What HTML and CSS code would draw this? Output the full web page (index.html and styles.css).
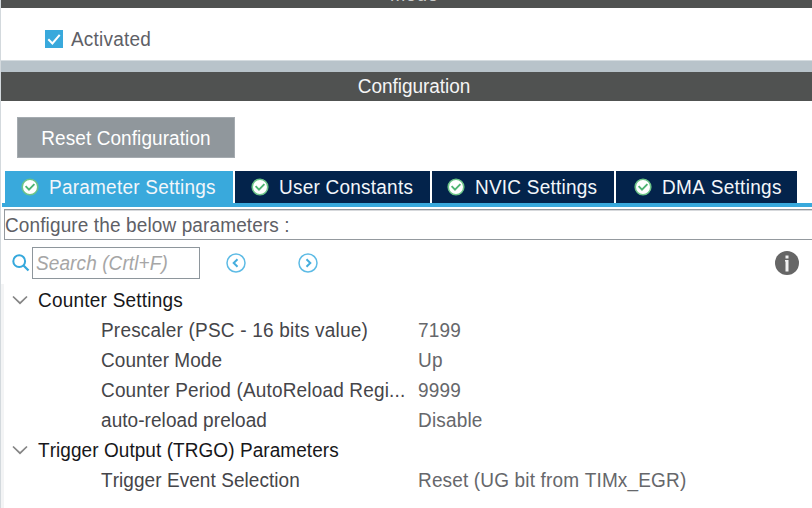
FILE: index.html
```html
<!DOCTYPE html>
<html lang="en">
<head>
<meta charset="utf-8">
<title>Timer configuration</title>
<link rel="stylesheet" href="styles.css">
</head>
<body>
<svg class="defs" aria-hidden="true">
  <symbol id="ok" viewBox="0 0 18 18"><circle cx="9" cy="9" r="7.8" fill="#fff" stroke="#6cc488" stroke-width="1.6"/><path d="M4.6 8.2 8 11.6l5.4-5.4" fill="none" stroke="#4fb573" stroke-width="1.9"/></symbol>
  <symbol id="chevron" viewBox="0 0 16 10"><path d="M1 1.5 8 8.2l7-6.7" fill="none" stroke="#858585" stroke-width="1.7"/></symbol>
</svg>
<main class="panel">
  <header class="bar mode"><span>Mode</span></header>
  <section class="activation">
    <label class="check">
      <svg class="box" viewBox="0 0 18 18"><path fill="#39a9dc" d="M0 0h18v18H0z"/><path d="M3.3 9.3 7.4 13.5 14.7 4.8" fill="none" stroke="#fff" stroke-width="2"/></svg>
      <span class="text">Activated</span>
    </label>
  </section>
  <div class="splitter"></div>
  <header class="bar config"><span class="text">Configuration</span></header>
  <section class="actions"><button class="reset" type="button"><span class="text">Reset Configuration</span></button></section>
  <nav class="tabs">
    <a class="tab parameter"><svg><use href="#ok"/></svg><span class="text">Parameter Settings</span></a>
    <a class="tab user"><svg><use href="#ok"/></svg><span class="text">User Constants</span></a>
    <a class="tab nvic"><svg><use href="#ok"/></svg><span class="text">NVIC Settings</span></a>
    <a class="tab dma"><svg><use href="#ok"/></svg><span class="text">DMA Settings</span></a>
  </nav>
  <div class="caption"><span class="text">Configure the below parameters :</span></div>
  <div class="toolbar">
    <svg class="lens" viewBox="0 0 18 18"><circle cx="7.2" cy="7.2" r="5.9" fill="none" stroke="#35a8dc" stroke-width="2"/><path d="m11.5 11.5 5 5" stroke="#35a8dc" stroke-width="2.3"/></svg>
    <div class="search"><span class="text">Search (Crtl+F)</span></div>
    <svg class="arrow prev" viewBox="0 0 20 20"><circle cx="10" cy="10" r="9" fill="none" stroke="#5dbbe5" stroke-width="1.5"/><path d="M11.5 6.2 7.7 10l3.8 3.8" fill="none" stroke="#45aede" stroke-width="2"/></svg>
    <svg class="arrow next" viewBox="0 0 20 20"><circle cx="10" cy="10" r="9" fill="none" stroke="#5dbbe5" stroke-width="1.5"/><path d="m8.5 6.2 3.8 3.8-3.8 3.8" fill="none" stroke="#45aede" stroke-width="2"/></svg>
    <svg class="info" viewBox="0 0 24 24"><circle cx="12" cy="12" r="12" fill="#666"/><path d="M10.5 4.5h3v3h-3zM10 9h3.5v11.4h-3v-9.8H10z" fill="#f2f2f2"/></svg>
  </div>
  <div class="tree">
    <div class="group"><svg><use href="#chevron"/></svg><span class="text wide">Counter Settings</span></div>
    <div class="row"><span class="text name">Prescaler (PSC - 16 bits value)</span><span class="text value">7199</span></div>
    <div class="row"><span class="text name tight">Counter Mode</span><span class="text value">Up</span></div>
    <div class="row"><span class="text name period">Counter Period (AutoReload Regi...</span><span class="text value">9999</span></div>
    <div class="row"><span class="text name tight">auto-reload preload</span><span class="text value">Disable</span></div>
    <div class="group"><svg><use href="#chevron"/></svg><span class="text tight">Trigger Output (TRGO) Parameters</span></div>
    <div class="row"><span class="text name tight">Trigger Event Selection</span><span class="text value">Reset (UG bit from TIMx_EGR)</span></div>
  </div>
</main>
</body>
</html>
```
FILE: styles.css
```css
* { box-sizing: border-box; }
body {
  margin: 0;
  background: #fff;
  color: #5e6066;
  font: 19px/30px "Liberation Sans", Arial, sans-serif;
  letter-spacing: 0.2px;
  font-kerning: none;
  white-space: nowrap;
  overflow: hidden;
}
svg { display: block; flex: none; }
.defs { position: absolute; width: 0; height: 0; }
.text { display: inline-block; transform: translateY(0.6px) scaleY(1.08); }
.panel { height: 508px; border-left: 1px solid #d3d9dd; overflow: hidden; }
.bar {
  display: flex;
  justify-content: center;
  background: #505251;
  color: #f5f5f5;
}
.mode { height: 8px; align-items: flex-end; overflow: hidden; color: #c9cbca; }
.mode span { line-height: 28px; margin-bottom: -1px; padding-left: 15px; }
.activation { display: flex; align-items: center; height: 52px; padding-left: 44px; }
.check { display: flex; align-items: center; gap: 8px; margin-top: 10px; }
.check .text { margin-top: -1px; }
.box { width: 18px; height: 18px; }
.splitter { height: 12px; margin-left: -1px; background: #b8c3ca; border-top: 1px solid #d5dce0; }
.config { height: 29px; letter-spacing: -0.05px; padding-left: 15px; }
.config .text { line-height: 28px; }
.actions { height: 70px; padding: 16px 0 0 16px; }
.reset {
  display: block;
  width: 218px;
  height: 41px;
  padding: 0;
  border: 1px solid #a5abb0;
  background: #90979c;
  color: #fff;
  font: inherit;
  letter-spacing: 0.08px;
}
.tabs {
  display: flex;
  gap: 2px;
  height: 36px;
  margin-left: 1px;
  padding-left: 3px;
  border-bottom: 4px solid #39a9dc;
}
.tab {
  display: flex;
  align-items: center;
  gap: 10px;
  height: 32px;
  padding-left: 16px;
  background: #03234b;
  color: #f2f6fa;
  letter-spacing: 0.23px;
}
.tab svg { width: 18px; height: 18px; margin-top: -1px; }
.parameter { width: 228px; background: #39a9dc; }
.user { width: 195px; }
.nvic { width: 182px; padding-left: 15px; }
.dma { width: 181px; padding-left: 18px; letter-spacing: 0.3px; }
.caption {
  height: 31px;
  margin: 2px -2px 0 3px;
  border: 1px solid #94999e;
  box-shadow: inset 0 1px #d7d9dc;
  letter-spacing: 0.12px;
}
.toolbar { display: flex; align-items: center; height: 44px; padding: 2px 13px 0 11px; }
.lens { width: 18px; height: 18px; }
.search {
  width: 168px;
  height: 32px;
  margin-left: 2px;
  padding-left: 3px;
  border: 1px solid #8e969c;
  color: #a6a6a6;
  font-style: italic;
  letter-spacing: 0.1px;
}
.arrow { width: 20px; height: 20px; }
.prev { margin-left: 26px; }
.next { margin-left: 52px; }
.info { width: 24px; height: 24px; margin-left: auto; }
.tree { border-left: 3px solid #f3f4f5; height: 224px; padding-top: 1px; }
.group { display: flex; align-items: center; height: 30px; padding-left: 8px; color: #17171a; }
.group svg { width: 16px; height: 10px; margin-right: 10px; }
.row { display: grid; grid-template-columns: 317px 1fr; height: 30px; padding-left: 97px; }
.name { color: #454549; }
.value { color: #66676b; letter-spacing: 0.16px; }
.wide { letter-spacing: 0.22px; }
.tight { letter-spacing: 0.06px; }
.period { letter-spacing: 0.16px; }
```
